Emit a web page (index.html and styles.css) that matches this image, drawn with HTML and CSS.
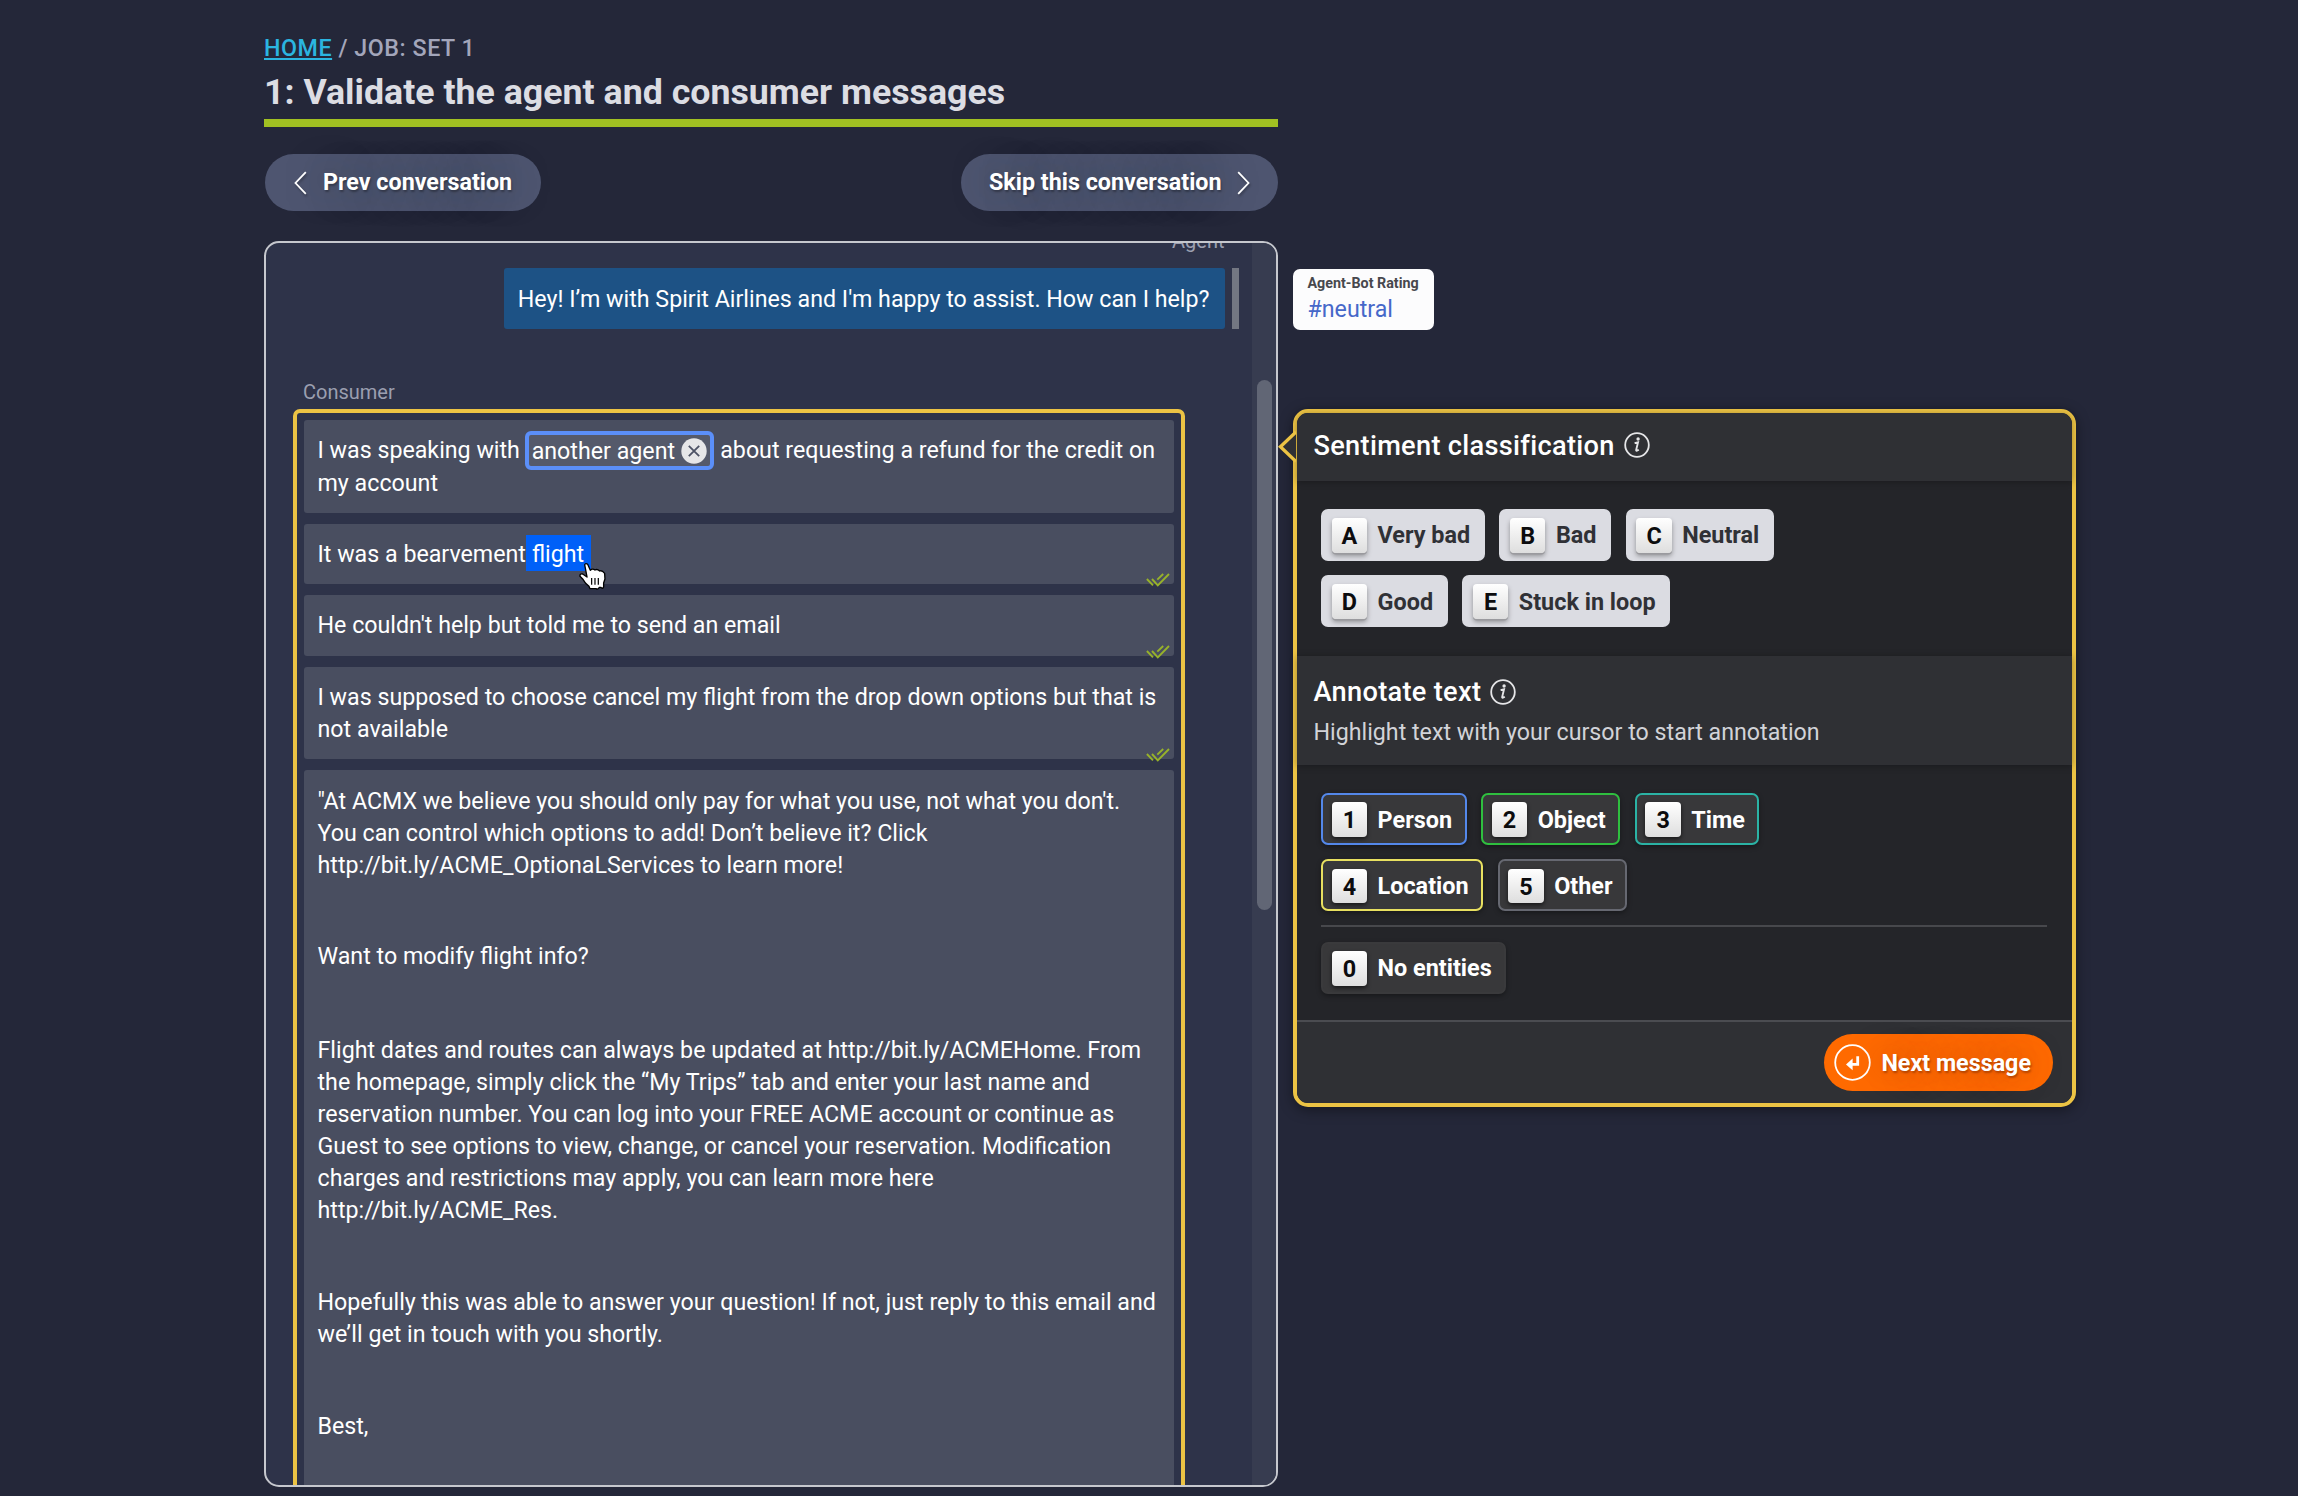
FILE: index.html
```
<!DOCTYPE html>
<html lang="en">
<head>
<meta charset="utf-8">
<title>Validate the agent and consumer messages</title>
<link rel="stylesheet" href="styles.css">
</head>
<body>
<svg class="defs" aria-hidden="true">
  <symbol id="info" viewBox="0 0 26 26">
    <circle cx="13" cy="13" r="11.8" fill="none" stroke="currentColor" stroke-width="1.8"/>
    <circle cx="14.1" cy="7" r="1.7" fill="currentColor"/>
    <path d="M10.6 11.2 L14 10.4 L12.2 17.9 Q11.9 19.6 14.8 17.7" fill="none" stroke="currentColor" stroke-width="1.9"/>
  </symbol>
  <symbol id="checks" viewBox="0 0 24 14">
    <path d="M0.9 6 L7 12.3 M6 6 L11.8 12.3 L23 1 M11.3 6.6 L17.2 1" fill="none" stroke="currentColor" stroke-width="1.9"/>
  </symbol>
</svg>
<main class="page">
  <header class="header">
    <nav class="crumbs"><a class="home" href="#">HOME</a> / JOB: SET 1</nav>
    <h1 class="title">1: Validate the agent and consumer messages</h1>
    <div class="nav-buttons">
      <button class="pill prev">
        <svg class="chevron" viewBox="0 0 13 24"><path d="M11.8 1.2 L1.5 12 L11.8 22.8"/></svg>
        <span>Prev conversation</span>
      </button>
      <button class="pill skip">
        <span>Skip this conversation</span>
        <svg class="chevron" viewBox="0 0 13 24"><path d="M1.2 1.2 L11.5 12 L1.2 22.8"/></svg>
      </button>
    </div>
  </header>

  <div class="workspace">
    <section class="chat">
      <div class="thread">
        <div class="label agent-label">Agent</div>
        <div class="agent-row">
          <div class="bubble">Hey! I’m with Spirit Airlines and I'm happy to assist. How can I help?</div>
          <div class="rating-bar"></div>
        </div>
        <div class="label">Consumer</div>
        <div class="group">
          <div class="msg">I was speaking with <span class="entity">another agent<svg class="remove" viewBox="0 0 26 26"><circle cx="13" cy="13" r="12.7" fill="#e6e6e8"/><path d="M7.8 7.8 L18.2 18.2 M18.2 7.8 L7.8 18.2" stroke="#4d5265" stroke-width="1.8"/></svg></span> about requesting a refund for the credit on<br>my account</div>
          <div class="msg">It was a bearvement<span class="selected">flight<svg class="cursor" viewBox="27 33 82 84"><path d="M44 41 Q47 35 53 40 L61 58 Q68 51 75 57 Q82 53 89 60 Q96 57 104 67 L105 84 L101 96 L101 108 Q98 115 92 109 L88 109 Q84 117 78 113 L60 113 L57 106 L47 97 L38 84 L30 76 Q29 67 38 69 L51 78 Z" fill="#fff" stroke="#000" stroke-width="4" stroke-linejoin="round"/><path d="M65 81 V101 M75 81 V101 M85 81 V101" stroke="#000" stroke-width="3.6"/></svg></span><svg class="checks"><use href="#checks"/></svg></div>
          <div class="msg">He couldn't help but told me to send an email<svg class="checks"><use href="#checks"/></svg></div>
          <div class="msg">I was supposed to choose cancel my flight from the drop down options but that is<br>not available<svg class="checks"><use href="#checks"/></svg></div>
          <div class="msg long">
            <p>"At ACMX we believe you should only pay for what you use, not what you don't.<br>You can control which options to add! Don’t believe it? Click<br>http://bit.ly/ACME_OptionaLServices to learn more!</p>
            <p>Want to modify flight info?</p>
            <p class="spaced">Flight dates and routes can always be updated at http://bit.ly/ACMEHome. From<br>the homepage, simply click the “My Trips” tab and enter your last name and<br>reservation number. You can log into your FREE ACME account or continue as<br>Guest to see options to view, change, or cancel your reservation. Modification<br>charges and restrictions may apply, you can learn more here<br>http://bit.ly/ACME_Res.</p>
            <p>Hopefully this was able to answer your question! If not, just reply to this email and<br>we’ll get in touch with you shortly.</p>
            <p>Best,</p>
          </div>
        </div>
      </div>
      <div class="track"><div class="thumb"></div></div>
    </section>

    <aside class="side">
      <div class="rating"><strong>Agent-Bot Rating</strong><span>#neutral</span></div>
      <section class="panel">
        <svg class="pointer" viewBox="0 0 18 32"><path d="M18 1 L2.4 15.8 L18 30.6" fill="#2f3034" stroke="#ecc344" stroke-width="3.4"/></svg>
        <div class="head first"><h2>Sentiment classification <svg class="info"><use href="#info"/></svg></h2></div>
        <div class="choices light">
          <div class="row">
            <button class="choice"><kbd>A</kbd>Very bad</button>
            <button class="choice"><kbd>B</kbd>Bad</button>
            <button class="choice"><kbd>C</kbd>Neutral</button>
          </div>
          <div class="row">
            <button class="choice"><kbd>D</kbd>Good</button>
            <button class="choice"><kbd>E</kbd>Stuck in loop</button>
          </div>
        </div>
        <div class="head second">
          <h2>Annotate text <svg class="info"><use href="#info"/></svg></h2>
          <p>Highlight text with your cursor to start annotation</p>
        </div>
        <div class="choices dark">
          <div class="row">
            <button class="choice person"><kbd>1</kbd>Person</button>
            <button class="choice object"><kbd>2</kbd>Object</button>
            <button class="choice time"><kbd>3</kbd>Time</button>
          </div>
          <div class="row">
            <button class="choice location"><kbd>4</kbd>Location</button>
            <button class="choice other"><kbd>5</kbd>Other</button>
          </div>
          <hr>
          <div class="row"><button class="choice"><kbd>0</kbd>No entities</button></div>
        </div>
        <footer class="foot">
          <button class="pill next">
            <svg class="enter" viewBox="0 0 37 37"><circle cx="18.5" cy="18.5" r="17.3" fill="none" stroke="#fff" stroke-width="1.8"/><path d="M23.7 12.3 V20.4 H15" fill="none" stroke="#fff" stroke-width="2.8"/><path d="M12 20.4 L18.6 14.6 V26.2 Z" fill="#fff"/></svg>
            <span>Next message</span>
          </button>
        </footer>
      </section>
    </aside>
  </div>
</main>
</body>
</html>
```
FILE: styles.css
```
* { box-sizing: border-box; }
html, body { margin: 0; height: 100%; }
body {
  background: #242739;
  color: #fff;
  font: 23.23px/32px Roboto, "Liberation Sans", sans-serif;
  overflow: hidden;
}
h1, h2, p { margin: 0; }
button { font: inherit; color: inherit; border: 0; margin: 0; }
.defs { display: none; }

.page { padding: 34px 0 0 264px; }
.header { width: 1014px; }
.crumbs {
  line-height: 28px;
  font-weight: 500;
  letter-spacing: 0.55px;
  color: #a3a6bb;
}
.home {
  color: #2bb5e0;
  text-decoration: underline;
  text-decoration-thickness: 1.5px;
  text-underline-offset: 2px;
}
.title {
  margin-top: 10px;
  padding-bottom: 7px;
  border-bottom: 8px solid #a1c022;
  font-size: 35.72px;
  line-height: 40px;
  font-weight: 700;
  color: #dcdde3;
}
.nav-buttons { display: flex; justify-content: space-between; margin-top: 27.4px; padding-left: 1px; }
.pill {
  display: flex;
  align-items: center;
  height: 57px;
  border-radius: 29px;
  font-weight: 700;
  font-size: 23.3px;
  background: #4e5570;
  text-shadow: 1px 2px 2px rgba(0,0,0,.3), 0 0 36px rgba(50,60,70,.55);
}
.pill span { margin-top: -2px; }
.prev { padding: 0 28.5px 0 29px; gap: 16px; }
.skip { width: 317.5px; padding: 0 0 0 28.5px; gap: 15px; }
.chevron {
  width: 13px; height: 24px;
  fill: none; stroke: #fff; stroke-width: 1.8;
  filter: drop-shadow(1px 2px 1px rgba(0,0,0,.3));
}

.workspace { display: flex; gap: 14.5px; margin-top: 29.6px; }
.chat {
  display: flex;
  width: 1014px;
  height: 1246px;
  border: 2px solid #c6c8ce;
  border-radius: 15px;
  background: #2e3349;
  overflow: hidden;
}
.thread { width: 986px; }
.label { padding-left: 37px; font-size: 20px; line-height: 24px; color: #9b9fb0; }
.agent-label { margin-top: -14px; padding-right: 27.5px; text-align: right; }
.agent-row { display: flex; justify-content: flex-end; gap: 7px; margin: 14.7px 13px 51.2px 0; }
.bubble { padding: 14.9px 15px 14.5px 14.2px; border-radius: 3px; background: #1d5285; line-height: 32px; }
.rating-bar { width: 7.5px; background: #737782; }
.group {
  display: flex;
  flex-direction: column;
  gap: 11px;
  width: 892px;
  height: 1200px;
  margin: 4.8px 0 0 26.5px;
  padding: 7px;
  border: 4px solid #ecc344;
  border-radius: 7px;
}
.msg {
  position: relative;
  flex: none;
  padding: 14.2px 0 14.2px 14px;
  border-radius: 3px;
  background: #494e60;
  white-space: nowrap;
}
.long { height: 1000px; padding-top: 14.6px; }
.long p + p { margin-top: 59.7px; }
.long p.spaced { margin-top: 62px; }
.entity {
  position: relative;
  top: -1.5px;
  display: inline-flex;
  align-items: center;
  height: 39px;
  margin: -5px 0.5px -5px -1px;
  padding: 0 3px;
  border: 4px solid #5b8ff9;
  border-radius: 6px;
  background: #555a6b;
  vertical-align: middle;
}
.remove { width: 26px; height: 26px; margin-left: 5.9px; }
.selected {
  position: relative;
  top: -2.5px;
  display: inline-block;
  height: 36px;
  line-height: 38px;
  margin: -4px 0;
  padding: 0 7px 0 6px;
  background: #0060f8;
  vertical-align: middle;
}
.cursor { position: absolute; left: 53px; top: 27px; width: 27.3px; height: 28px; z-index: 2; }
.checks { position: absolute; right: 4px; bottom: -3px; width: 24px; height: 14px; color: #97b22a; }
.track { width: 24px; background: #373c50; padding: 136.7px 0 0 5px; }
.thumb { width: 14.5px; height: 530.5px; border-radius: 8px; background: #616675; }

.side { display: flex; flex-direction: column; align-items: flex-start; padding-top: 28px; }
.rating {
  display: flex;
  flex-direction: column;
  width: 141px;
  height: 61px;
  padding: 4px 0 0 15px;
  border-radius: 7px;
  background: #fcfcfd;
}
.rating strong { font-size: 14.3px; line-height: 20px; color: #47484d; }
.rating span { line-height: 32px; color: #4668c9; }
.panel {
  position: relative;
  width: 783px;
  height: 698.5px;
  margin-top: 79px;
  border: 4px solid #ecc344;
  border-radius: 15px;
  background: #242529;
  box-shadow: 0 3px 14px rgba(0,0,0,.4);
}
.pointer { position: absolute; left: -18.5px; top: 18px; width: 18px; height: 32px; z-index: 1; }
.head { padding-left: 17px; background: #2f3034; box-shadow: 0 1px 7px rgba(0,0,0,.3); }
.first { height: 68px; padding-top: 17px; border-radius: 11px 11px 0 0; }
.second { height: 109.5px; padding-top: 20.7px; }
h2 { display: flex; align-items: center; gap: 9px; font-size: 27.2px; line-height: 32px; font-weight: 500; letter-spacing: 0.3px; }
.info { width: 26px; height: 26px; margin-top: -1px; color: #e6e6e8; }
.head p { margin-top: 8px; color: #d2d3d8; }
.choices { padding: 28px 24.5px 0; height: 174.7px; }
.dark { height: 254.5px; }
.row { display: flex; gap: 14.5px; }
.row + .row { margin-top: 14.2px; }
.choice {
  display: flex;
  align-items: center;
  height: 52px;
  padding: 1px 14.6px 0 10.7px;
  border-radius: 7px;
  font-weight: 700;
  font-size: 23.4px;
}
.light .choice { background: #dbdce2; color: #303136; }
.dark .choice {
  padding: 1px 12.5px 0 8.7px;
  border: 2px solid #3a3a3c;
  background: #38383a;
  color: #fff;
  box-shadow: 0 2px 5px rgba(0,0,0,.35);
}
.dark .person { border-color: #5488ea; }
.dark .object { border-color: #2fbf3f; }
.dark .time { border-color: #2bb3a5; }
.dark .location { border-color: #e8e060; }
.dark .other { border-color: #666871; }
kbd {
  width: 35.5px;
  height: 34.5px;
  margin-right: 10.4px;
  border-radius: 4px;
  background: linear-gradient(#fff, #dedede);
  box-shadow: 0 1.6px 0 #9a9a9e, 0 3px 5px rgba(0,0,0,.35);
  color: #0c0c0e;
  font: inherit;
  line-height: 36px;
  text-align: center;
}
.dark kbd { box-shadow: 0 2px 4px rgba(0,0,0,.6); }
hr { height: 2px; margin: 14px 0 14.5px; border: 0; background: #47484c; }
.foot {
  display: flex;
  justify-content: flex-end;
  height: 83.8px;
  padding: 12.5px 19px 0 0;
  border-top: 2px solid #4b4c51;
  border-radius: 0 0 11px 11px;
  background: #2f3034;
}
.next {
  padding: 0 21.5px 0 10px;
  gap: 10.7px;
  background: #ff6a00;
  text-shadow: 1px 2px 2px rgba(120,40,0,.5), 0 0 30px rgba(150,60,0,.55);
}
.next span { margin-top: 1px; }
.enter { width: 37px; height: 37px; }
```
